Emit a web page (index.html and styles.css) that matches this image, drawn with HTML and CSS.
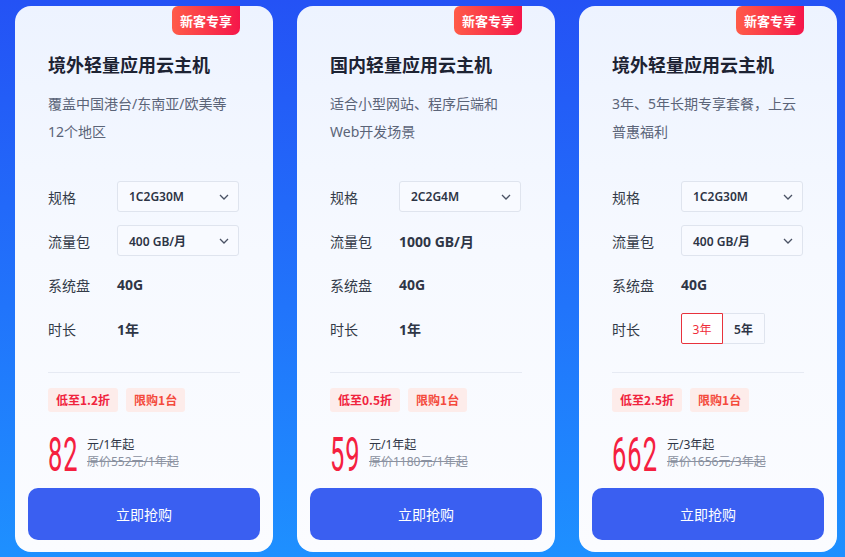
FILE: index.html
```html
<!DOCTYPE html>
<html lang="zh-CN">
<head>
<meta charset="utf-8">
<title>轻量应用云主机</title>
<link rel="stylesheet" href="styles.css">
</head>
<body>
<div class="wrap">
  <div class="card">
    <div class="badge">新客专享</div>
    <h2 class="title">境外轻量应用云主机</h2>
    <p class="desc">覆盖中国港台/东南亚/欧美等12个地区</p>
    <div class="rows">
      <div class="row"><span class="label">规格</span><div class="select"><span>1C2G30M</span><svg class="chev" viewBox="0 0 10 6" width="10" height="6"><path d="M1 1l4 4 4-4" fill="none" stroke="#4a5264" stroke-width="1.3"/></svg></div></div>
      <div class="row"><span class="label">流量包</span><div class="select"><span>400 GB/月</span><svg class="chev" viewBox="0 0 10 6" width="10" height="6"><path d="M1 1l4 4 4-4" fill="none" stroke="#4a5264" stroke-width="1.3"/></svg></div></div>
      <div class="row"><span class="label">系统盘</span><span class="value">40G</span></div>
      <div class="row"><span class="label">时长</span><span class="value">1年</span></div>
    </div>
    <div class="divider"></div>
    <div class="tags"><span class="tag">低至1.2折</span><span class="tag">限购1台</span></div>
    <div class="price">
      <span class="num num-2">82</span>
      <div class="unit"><div class="now">元/1年起</div><div class="old">原价552元/1年起</div></div>
    </div>
    <button class="buy">立即抢购</button>
  </div>

  <div class="card">
    <div class="badge">新客专享</div>
    <h2 class="title">国内轻量应用云主机</h2>
    <p class="desc">适合小型网站、程序后端和Web开发场景</p>
    <div class="rows">
      <div class="row"><span class="label">规格</span><div class="select"><span>2C2G4M</span><svg class="chev" viewBox="0 0 10 6" width="10" height="6"><path d="M1 1l4 4 4-4" fill="none" stroke="#4a5264" stroke-width="1.3"/></svg></div></div>
      <div class="row"><span class="label">流量包</span><span class="value">1000 GB/月</span></div>
      <div class="row"><span class="label">系统盘</span><span class="value">40G</span></div>
      <div class="row"><span class="label">时长</span><span class="value">1年</span></div>
    </div>
    <div class="divider"></div>
    <div class="tags"><span class="tag">低至0.5折</span><span class="tag">限购1台</span></div>
    <div class="price">
      <span class="num num-2">59</span>
      <div class="unit"><div class="now">元/1年起</div><div class="old">原价1180元/1年起</div></div>
    </div>
    <button class="buy">立即抢购</button>
  </div>

  <div class="card">
    <div class="badge">新客专享</div>
    <h2 class="title">境外轻量应用云主机</h2>
    <p class="desc">3年、5年长期专享套餐，上云普惠福利</p>
    <div class="rows">
      <div class="row"><span class="label">规格</span><div class="select"><span>1C2G30M</span><svg class="chev" viewBox="0 0 10 6" width="10" height="6"><path d="M1 1l4 4 4-4" fill="none" stroke="#4a5264" stroke-width="1.3"/></svg></div></div>
      <div class="row"><span class="label">流量包</span><div class="select"><span>400 GB/月</span><svg class="chev" viewBox="0 0 10 6" width="10" height="6"><path d="M1 1l4 4 4-4" fill="none" stroke="#4a5264" stroke-width="1.3"/></svg></div></div>
      <div class="row"><span class="label">系统盘</span><span class="value">40G</span></div>
      <div class="row"><span class="label">时长</span><div class="toggle"><span class="opt active">3年</span><span class="opt">5年</span></div></div>
    </div>
    <div class="divider"></div>
    <div class="tags"><span class="tag">低至2.5折</span><span class="tag">限购1台</span></div>
    <div class="price">
      <span class="num num-3">662</span>
      <div class="unit"><div class="now">元/3年起</div><div class="old">原价1656元/3年起</div></div>
    </div>
    <button class="buy">立即抢购</button>
  </div>
</div>
</body>
</html>
```

FILE: styles.css
```css
* { box-sizing: border-box; }
html, body { margin: 0; padding: 0; }
body {
  width: 845px;
  height: 557px;
  overflow: hidden;
  background: linear-gradient(180deg, #2452f5 0%, #2174fb 55%, #1e90ff 100%);
  font-family: "Noto Sans", "Noto Sans CJK SC", sans-serif;
}
.wrap {
  display: flex;
  gap: 24px;
  padding: 6px 0 0 15px;
}
.card {
  position: relative;
  width: 258px;
  height: 546px;
  border-radius: 16px;
  background: linear-gradient(180deg, #edf3ff 0%, #f6f9ff 45%, #fbfcff 100%);
  padding: 46px 33px 0 33px;
  display: flex;
  flex-direction: column;
}
.badge {
  position: absolute;
  top: 0;
  right: 33px;
  width: 68px;
  height: 29px;
  border-radius: 6px 0 7px 7px;
  background: linear-gradient(90deg, #ff5b48 0%, #f5164a 100%);
  color: #fff;
  font-size: 13px;
  font-weight: 700;
  line-height: 29px;
  text-align: center;
  font-family: "Noto Sans CJK SC", sans-serif;
}
.title {
  margin: 0;
  font-size: 18px;
  font-weight: 700;
  line-height: 24px;
  color: #1d2333;
  font-family: "Noto Sans CJK SC", sans-serif;
}
.desc {
  margin: 14px 0 0;
  font-size: 14px;
  line-height: 28px;
  color: #5b6478;
  height: 56px;
}
.rows {
  margin-top: 35px;
  display: flex;
  flex-direction: column;
  gap: 13px;
}
.row {
  display: flex;
  align-items: center;
  height: 31px;
}
.label {
  width: 69px;
  flex: none;
  font-size: 14px;
  color: #333a48;
}
.value {
  font-size: 14px;
  font-weight: 700;
  color: #2f3646;
}
.select {
  width: 122px;
  height: 31px;
  border: 1px solid #dfe4ee;
  border-radius: 3px;
  background: #f8faff;
  display: flex;
  align-items: center;
  justify-content: space-between;
  padding: 0 9px 0 11px;
  font-size: 12px;
  font-weight: 600;
  color: #2d3445;
}
.chev { display: block; }
.toggle {
  display: flex;
}
.opt {
  width: 42px;
  height: 31px;
  border: 1px solid #dfe4ee;
  font-size: 12px;
  font-weight: 600;
  color: #2d3445;
  display: flex;
  align-items: center;
  justify-content: center;
  background: #f8faff;
}
.opt:first-child { border-radius: 2px 0 0 2px; }
.opt:last-child { border-radius: 0 2px 2px 0; border-left: none; }
.opt.active {
  border-color: #e8323c;
  color: #ef2d3a;
  font-weight: 400;
  background: #fff;
}
.divider {
  margin-top: 28px;
  height: 1px;
  background: #e6eaf3;
}
.tags {
  margin-top: 15px;
  display: flex;
  gap: 8px;
}
.tag {
  height: 24px;
  padding: 0 8px;
  border-radius: 3px;
  background: #fdecea;
  font-size: 12px;
  font-weight: 700;
  line-height: 24px;
  color: #f0233d;
  font-family: "Noto Sans CJK SC", sans-serif;
}
.tag:last-child { color: #f44a3c; }
.price {
  margin-top: 23px;
  display: flex;
  align-items: flex-start;
  height: 40px;
}
.num {
  display: inline-block;
  font-family: Roboto, sans-serif;
  font-size: 48px;
  line-height: 40px;
  letter-spacing: 2px;
  color: #f5203f;
  transform: scaleX(0.53);
  transform-origin: left top;
}
.num-2 { margin-right: -19px; }
.num-3 { margin-right: -32px; }
.unit {
  padding-top: 1px;
  font-size: 12px;
  line-height: 17px;
}
.now { color: #2f3545; }
.old {
  color: #8a91a0;
  text-decoration: line-through;
}
.buy {
  margin: 13px -20px 0;
  height: 52px;
  border: none;
  border-radius: 10px;
  background: #3a5ff1;
  color: #fff;
  font-size: 14px;
  font-family: "Noto Sans", "Noto Sans CJK SC", sans-serif;
}
```
